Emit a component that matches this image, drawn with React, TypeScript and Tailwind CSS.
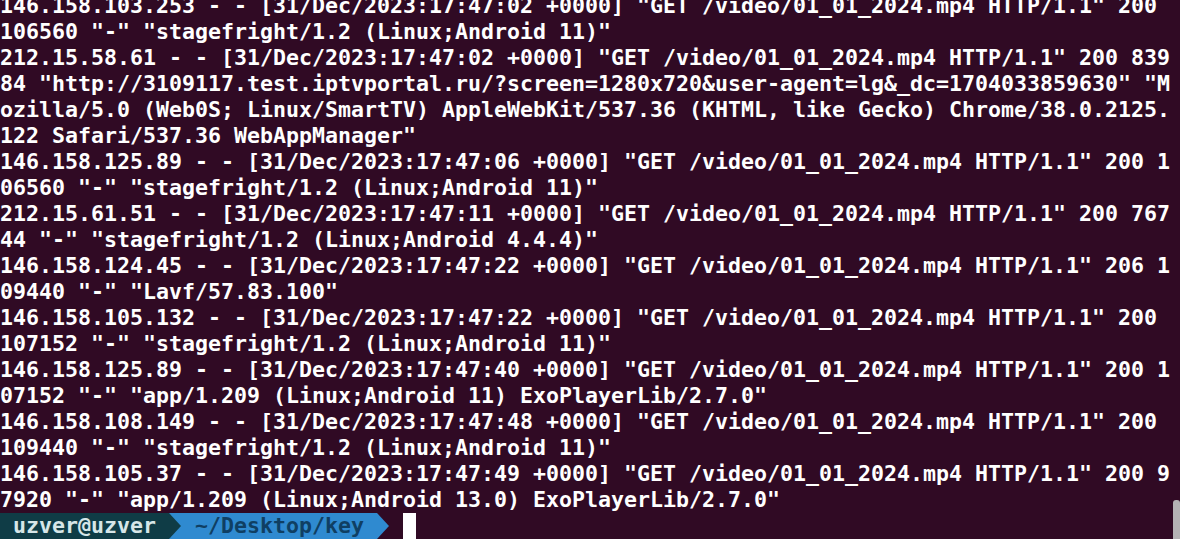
import React from "react";

const lines: string[] = [
  '146.158.103.253 - - [31/Dec/2023:17:47:02 +0000] "GET /video/01_01_2024.mp4 HTTP/1.1" 200 ',
  '106560 "-" "stagefright/1.2 (Linux;Android 11)"',
  '212.15.58.61 - - [31/Dec/2023:17:47:02 +0000] "GET /video/01_01_2024.mp4 HTTP/1.1" 200 839',
  '84 "http://3109117.test.iptvportal.ru/?screen=1280x720&user-agent=lg&_dc=1704033859630" "M',
  'ozilla/5.0 (Web0S; Linux/SmartTV) AppleWebKit/537.36 (KHTML, like Gecko) Chrome/38.0.2125.',
  '122 Safari/537.36 WebAppManager"',
  '146.158.125.89 - - [31/Dec/2023:17:47:06 +0000] "GET /video/01_01_2024.mp4 HTTP/1.1" 200 1',
  '06560 "-" "stagefright/1.2 (Linux;Android 11)"',
  '212.15.61.51 - - [31/Dec/2023:17:47:11 +0000] "GET /video/01_01_2024.mp4 HTTP/1.1" 200 767',
  '44 "-" "stagefright/1.2 (Linux;Android 4.4.4)"',
  '146.158.124.45 - - [31/Dec/2023:17:47:22 +0000] "GET /video/01_01_2024.mp4 HTTP/1.1" 206 1',
  '09440 "-" "Lavf/57.83.100"',
  '146.158.105.132 - - [31/Dec/2023:17:47:22 +0000] "GET /video/01_01_2024.mp4 HTTP/1.1" 200',
  '107152 "-" "stagefright/1.2 (Linux;Android 11)"',
  '146.158.125.89 - - [31/Dec/2023:17:47:40 +0000] "GET /video/01_01_2024.mp4 HTTP/1.1" 200 1',
  '07152 "-" "app/1.209 (Linux;Android 11) ExoPlayerLib/2.7.0"',
  '146.158.108.149 - - [31/Dec/2023:17:47:48 +0000] "GET /video/01_01_2024.mp4 HTTP/1.1" 200',
  '109440 "-" "stagefright/1.2 (Linux;Android 11)"',
  '146.158.105.37 - - [31/Dec/2023:17:47:49 +0000] "GET /video/01_01_2024.mp4 HTTP/1.1" 200 9',
  '7920 "-" "app/1.209 (Linux;Android 13.0) ExoPlayerLib/2.7.0"',
];

function Arrow({ fill, bg }: { fill: string; bg: string }) {
  return (
    <svg width="13" height="26" viewBox="0 0 13 26" className="block shrink-0" style={{ background: bg }}>
      <polygon points="0,0 12,13 0,26" fill={fill} />
    </svg>
  );
}

export default function App() {
  return (
    <div className="relative h-[539px] w-[1180px] overflow-hidden bg-[#300a24] font-['DejaVu_Sans_Mono',monospace] text-[21.6px] font-bold leading-[26px] text-white">
      <div className="-mt-[7px] flex flex-col">
        {lines.map((l, i) => (
          <div key={i} className="h-[26px] whitespace-pre">
            {l}
          </div>
        ))}
        <div className="flex h-[26px] items-stretch whitespace-pre">
          <div className="bg-[#0f3c46] text-[#d6e6e8]"> uzver@uzver </div>
          <Arrow fill="#0f3c46" bg="#2f8ad0" />
          <div className="bg-[#2f8ad0] text-[#0f3f63]"> ~/Desktop/key </div>
          <Arrow fill="#2f8ad0" bg="#300a24" />
          <div className="w-[13px]" />
          <div className="w-[13px] bg-white" />
        </div>
      </div>
      <div className="absolute bottom-0 right-0 h-[39px] w-[7px] rounded-tl-[3px] rounded-tr-[3px] bg-[#b4b2b4]" />
    </div>
  );
}
